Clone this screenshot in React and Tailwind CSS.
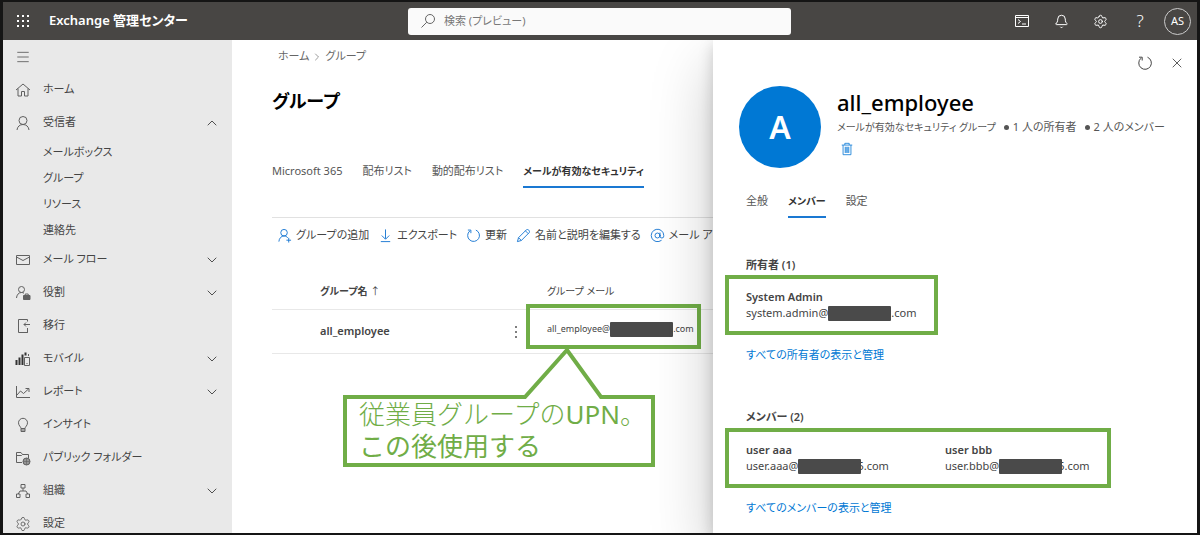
import React from "react";
import { Settings, Bell, X, ChevronDown, ChevronUp, ChevronRight, AtSign, Menu } from "lucide-react";

function Glyph({ children, className = "size-4" }) {
  return (
    <svg
      viewBox="0 0 16 16"
      className={`${className} shrink-0`}
      fill="none"
      stroke="currentColor"
      strokeWidth="1"
      strokeLinejoin="round"
      aria-hidden="true"
    >
      {children}
    </svg>
  );
}

const glyphs = {
  home: <path d="M1 8 8 2l7 6M3 6.500V14h3.500V9.500h3V14H13V6.500" />,
  person: (
    <>
      <circle cx="8" cy="5.500" r="4" />
      <path d="M2 15c.3-3.300 2.700-5.500 6-5.500s5.700 2.200 6 5.500" />
    </>
  ),
  mail: (
    <>
      <rect x="1.500" y="3.500" width="13" height="9" />
      <path d="m1.500 5 6.500 3.500L14.500 5" />
    </>
  ),
  role: (
    <>
      <circle cx="6.500" cy="4.500" r="3" />
      <path d="M1.500 13c.2-3 2-5.500 5-5.500 1 0 1.800.2 2.500.7" />
      <rect x="8.500" y="10.500" width="6.500" height="4" fill="currentColor" />
      <path d="M10.200 10.500V9h3v1.500" />
    </>
  ),
  migrate: (
    <>
      <path d="M12.500 3.500v-2h-9v13h9V10" />
      <path d="M15 6.500H9m2-2-2 2 2 2M12.500 10v4.500h-2" />
    </>
  ),
  mobile: (
    <>
      <path d="M1.500 9v5M4.500 6.500V14M7.500 3.500V14M10.500 1.500v3" strokeWidth="2" stroke="#333" />
      <rect x="9.500" y="6.500" width="5" height="8" fill="#e9e9e9" />
      <path d="M11.500 12.500h1M13.500 3v2" />
    </>
  ),
  report: <path d="M1.500 2v11.500H15M2 11l3.500-4 3 2.500L13.500 5M10.500 4.500H14V8" />,
  bulb: (
    <path d="M6 11.500c0-1.800-2.500-2.700-2.500-5.700a4.500 4.500 0 0 1 9 0c0 3-2.500 3.900-2.500 5.700zM6 11.500v3h4v-3M6 13h4" />
  ),
  folder: (
    <>
      <path d="M7 12.500H1.500v-10h4.500l1.500 2h6V8M1.500 5.500h5l1-1" />
      <circle cx="11.500" cy="11.500" r="3.500" fill="currentColor" fillOpacity=".6" />
      <path d="M8 11.500h7M11.500 8v7" strokeWidth=".6" />
    </>
  ),
  org: (
    <>
      <rect x="6" y="1.500" width="4" height="3.500" />
      <rect x="1.500" y="11" width="3.500" height="3.500" />
      <rect x="11" y="11" width="3.500" height="3.500" />
      <path d="M8 5v3M3.200 11 5 8h6l1.800 3" />
    </>
  ),
  addPerson: (
    <>
      <circle cx="7.500" cy="5" r="3.500" />
      <path d="M2 14.500c.3-3.500 2.500-6 5.500-6 1.700 0 3 .7 4 2M10 13h5M12.500 10.500v5" />
    </>
  ),
  download: <path d="M8 1.500v10M4 8l4 4 4-4M3 14.500h10" />,
  refresh: (
    <>
      <path d="M10.500 2.200A6.300 6.300 0 1 1 4 3.200" />
      <path d="M2 2.200h3.200v3.300" />
    </>
  ),
  pencil: <path d="m1.500 14.500 1.200-4.200 8.400-8.400c1.600-1.200 4.200 1.400 3 3l-8.400 8.400zM10 3l3 3M2.700 10.300l3 3" />,
  trash: (
    <>
      <path d="M2 3.500h12M5.500 3.500v-2h5v2M3.500 3.500v11h9v-11" />
      <rect x="5.500" y="5.500" width="5" height="7" fill="currentColor" fillOpacity=".5" stroke="none" />
      <path d="M6 5.500v7M8 5.500v7M10 5.500v7" strokeWidth=".7" />
    </>
  ),
  shell: (
    <>
      <rect x="1.500" y="2.500" width="13" height="11" />
      <path d="M1.500 4.500h13M4 6.500l2.500 2-2.500 2M8 11h4" />
    </>
  ),
  search: (
    <>
      <circle cx="10" cy="6" r="4.500" />
      <path d="M6.800 9.200 1.500 14.500" />
    </>
  ),
};

const navigation = [
  { label: "ホーム", icon: "home" },
  { label: "受信者", icon: "person", open: true, items: ["メールボックス", "グループ", "リソース", "連絡先"] },
  { label: "メール フロー", icon: "mail", open: false },
  { label: "役割", icon: "role", open: false },
  { label: "移行", icon: "migrate" },
  { label: "モバイル", icon: "mobile", open: false },
  { label: "レポート", icon: "report", open: false },
  { label: "インサイト", icon: "bulb" },
  { label: "パブリック フォルダー", icon: "folder" },
  { label: "組織", icon: "org", open: false },
  { label: "設定", icon: "settings" },
];

function TopBar() {
  return (
    <header className="relative z-20 flex h-[38px] shrink-0 items-center bg-[#484644] text-white">
      <div className="flex w-[405px] shrink-0 items-center gap-[18px] pl-3">
        <button aria-label="アプリ起動ツール" className="grid size-4 place-items-center">
          <svg viewBox="0 0 14 14" className="size-[14px]" fill="currentColor" aria-hidden="true">
            {[1, 6, 11].map((y) => [1, 6, 11].map((x) => <rect key={`${x}-${y}`} x={x} y={y} width="2" height="2" />))}
          </svg>
        </button>
        <span className="text-[13px] font-semibold">Exchange 管理センター</span>
      </div>
      <label className="flex h-[27px] w-[383px] items-center gap-2 rounded-[3px] bg-[#fafafa] px-3 text-[#666]">
        <Glyph>{glyphs.search}</Glyph>
        <input
          type="search"
          aria-label="検索"
          placeholder="検索 (プレビュー)"
          className="min-w-0 flex-1 bg-transparent text-[11px] outline-none placeholder:text-[#777]"
        />
      </label>
      <div className="ml-auto flex items-center gap-6 pr-1.5">
        <button aria-label="Cloud Shell"><Glyph>{glyphs.shell}</Glyph></button>
        <button aria-label="通知"><Bell className="size-[15px]" strokeWidth={1.6} /></button>
        <button aria-label="設定"><Settings className="size-[15px]" strokeWidth={1.6} /></button>
        <button aria-label="ヘルプ" className="w-4 text-center text-[17px] leading-4 font-light">?</button>
        <button className="-ml-2 grid size-[27px] place-items-center rounded-full border border-[#ccc] text-[11px]">AS</button>
      </div>
    </header>
  );
}

function Sidebar() {
  return (
    <nav className="w-[229px] shrink-0 overflow-hidden bg-[#e9e9e9] text-[11px] text-[#444]">
      <button aria-label="メニュー" className="flex h-[33px] items-center pl-3 text-[#666]">
        <Menu className="size-4" strokeWidth={1.4} />
      </button>
      <ul>
        {navigation.map((entry) => (
          <li key={entry.label}>
            <a href="#" className="flex h-[33px] items-center gap-3 pr-3 pl-3">
              <span className="text-[#606060]">
                {entry.icon === "settings" ? (
                  <Settings className="size-4" strokeWidth={1.3} />
                ) : (
                  <Glyph>{glyphs[entry.icon]}</Glyph>
                )}
              </span>
              <span className="flex-1">{entry.label}</span>
              {entry.open === true && <ChevronUp className="size-4" strokeWidth={1.4} />}
              {entry.open === false && <ChevronDown className="size-4" strokeWidth={1.4} />}
            </a>
            {entry.items && (
              <ul>
                {entry.items.map((item) => (
                  <li key={item}>
                    <a href="#" className="flex h-[26px] items-center pl-10">{item}</a>
                  </li>
                ))}
              </ul>
            )}
          </li>
        ))}
      </ul>
    </nav>
  );
}

function Tabs({ tabs, active, className }) {
  return (
    <div role="tablist" className={`flex h-9 items-stretch gap-5 whitespace-nowrap ${className}`}>
      {tabs.map((tab) => (
        <button
          key={tab}
          role="tab"
          aria-selected={tab === active}
          className={
            tab === active
              ? "border-b-2 border-[#1a78d2] pt-1 text-[10px] font-bold text-[#333]"
              : "border-b-2 border-transparent pt-1 text-[#555]"
          }
        >
          {tab}
        </button>
      ))}
    </div>
  );
}

function Redacted() {
  return <span className="relative h-[15px] w-[63px] shrink-0 rounded-[1px] bg-[#4a4a4a]" />;
}

function Address({ user, tail = ".com" }) {
  return (
    <span className="flex h-4 items-center">
      {user}@<Redacted />
      <span className={tail === ".com" ? "" : "-ml-1"}>{tail}</span>
    </span>
  );
}

function Callout() {
  return (
    <aside className="absolute top-[307px] left-[109px] w-[316px] text-[#70ad47]">
      <svg viewBox="0 0 316 122" className="block w-full" fill="none" stroke="currentColor" strokeWidth="4" aria-hidden="true">
        <path d="M4 50H184L226 3L260 50H312V118H4Z" />
      </svg>
      <p className="absolute top-[51px] left-[18px] text-[26px] leading-8 font-light whitespace-nowrap [font-feature-settings:normal]">
        <span className="block">従業員グループの<span className="font-normal">UPN</span>。</span>
        <span className="block font-normal">この後使用する</span>
      </p>
    </aside>
  );
}

function Groups() {
  return (
    <main className="relative min-w-0 flex-1 overflow-hidden bg-white pl-10 text-[11px] text-[#444]">
      <div className="flex h-[33px] items-center gap-[2px] pl-[6px] text-[#666]">
        <a href="#">ホーム</a>
        <ChevronRight className="size-3" strokeWidth={1.3} />
        <a href="#">グループ</a>
      </div>
      <h1 className="h-14 pt-3 text-lg leading-8 font-bold text-black">グループ</h1>
      <Tabs
        className="mt-[23px]"
        tabs={["Microsoft 365", "配布リスト", "動的配布リスト", "メールが有効なセキュリティ"]}
        active="メールが有効なセキュリティ"
      />
      <div className="mt-[29px] flex h-9 items-center gap-[9px] border-t border-[#e1e1e1] pl-[5px] whitespace-nowrap">
        {[
          ["グループの追加", "addPerson"],
          ["エクスポート", "download"],
          ["更新", "refresh"],
          ["名前と説明を編集する", "pencil"],
          ["メール アドレス", "at"],
        ].map(([label, icon]) => (
          <button key={label} className="flex items-center gap-1">
            <span className="text-[#1a78d2]">
              {icon === "at" ? <AtSign className="size-[15px]" strokeWidth={1.5} /> : <Glyph className="size-[15px]">{glyphs[icon]}</Glyph>}
            </span>
            {label}
          </button>
        ))}
      </div>
      <table className="mt-[21px] w-full table-fixed text-left">
        <thead>
          <tr className="h-[35px] border-b border-[#e8e8e8]">
            <th className="w-[236px] pl-12 text-[10px] font-bold">グループ名 <span className="font-normal">↑</span></th>
            <th className="w-[39px]" aria-label="操作" />
            <th className="text-[10px] font-normal">グループ メール</th>
          </tr>
        </thead>
        <tbody>
          <tr className="h-11 border-b border-[#e8e8e8]">
            <td className="pl-12 font-semibold">all_employee</td>
            <td>
              <button aria-label="その他" className="grid h-4 w-4 place-items-center text-[#555]">
                <svg viewBox="0 0 16 16" className="size-4" fill="currentColor" aria-hidden="true">
                  <circle cx="8" cy="4" r="1" />
                  <circle cx="8" cy="9" r="1" />
                  <circle cx="8" cy="14" r="1" />
                </svg>
              </button>
            </td>
            <td className="relative pb-1 text-[9px]">
              <Address user="all_employee" />
              <span className="absolute -top-[6px] -left-[21px] h-[45px] w-[175px] border-4 border-[#70ad47]" />
            </td>
          </tr>
        </tbody>
      </table>
      <Callout />
    </main>
  );
}

function People({ people, className }) {
  return (
    <ul className={`ml-3 flex h-[60px] items-center border-4 border-[#70ad47] pl-[17px] ${className}`}>
      {people.map(({ name, user, tail }) => (
        <li key={user} className="w-[199px] shrink-0 leading-4">
          <strong className="block font-semibold">{name}</strong>
          <Address user={user} tail={tail} />
        </li>
      ))}
    </ul>
  );
}

function Fact({ children }) {
  return (
    <span className="flex items-center gap-1">
      <span className="size-[5px] rounded-full bg-[#555]" />
      {children}
    </span>
  );
}

function DetailsPanel() {
  return (
    <section className="relative z-10 w-[484px] shrink-0 bg-white text-[11px] text-[#444] shadow-[0_26px_58px_rgba(0,0,0,0.22),0_5px_14px_rgba(0,0,0,0.18)]">
      <div className="flex h-[46px] items-center justify-end gap-4 pr-3">
        <button aria-label="更新"><Glyph>{glyphs.refresh}</Glyph></button>
        <button aria-label="閉じる"><X className="size-4" strokeWidth={1.3} /></button>
      </div>
      <div className="flex gap-4 pl-[26px]">
        <span className="grid size-[82px] shrink-0 place-items-center rounded-full bg-[#0078d4] text-[32px] font-semibold text-white">A</span>
        <div>
          <h2 className="h-8 text-[22px] leading-8 font-medium text-black">all_employee</h2>
          <p className="flex h-[18px] items-center gap-2 whitespace-nowrap text-[#555]">
            <span className="text-[10px]">メールが有効なセキュリティ グループ</span>
            <Fact>1 人の所有者</Fact>
            <Fact>2 人のメンバー</Fact>
          </p>
          <button aria-label="削除" className="mt-[6px] ml-[3px] text-[#1a82d9]">
            <Glyph className="size-[14px]">{glyphs.trash}</Glyph>
          </button>
        </div>
      </div>
      <Tabs className="mt-[14px] pl-[33px]" tabs={["全般", "メンバー", "設定"]} active="メンバー" />
      <h3 className="mt-[39px] mb-[2px] pl-[33px] leading-4 font-semibold">所有者 (1)</h3>
      <People className="w-[213px]" people={[{ name: "System Admin", user: "system.admin" }]} />
      <a href="#" className="mt-3 ml-[33px] block leading-4 text-[#0078d4]">すべての所有者の表示と管理</a>
      <h3 className="mt-[46px] mb-[3px] pl-[33px] leading-4 font-semibold">メンバー (2)</h3>
      <People
        className="w-[386px]"
        people={[
          { name: "user aaa", user: "user.aaa", tail: "5.com" },
          { name: "user bbb", user: "user.bbb", tail: "5.com" },
        ]}
      />
      <a href="#" className="mt-3 ml-[33px] block leading-4 text-[#0078d4]">すべてのメンバーの表示と管理</a>
    </section>
  );
}

export default function App() {
  return (
    <div className="flex h-screen flex-col overflow-hidden border-x-[3px] border-y-2 border-[#151515] bg-white font-['Noto_Sans','Noto_Sans_CJK_JP',sans-serif] [font-feature-settings:'palt']">
      <TopBar />
      <div className="flex min-h-0 flex-1">
        <Sidebar />
        <Groups />
        <DetailsPanel />
      </div>
    </div>
  );
}
